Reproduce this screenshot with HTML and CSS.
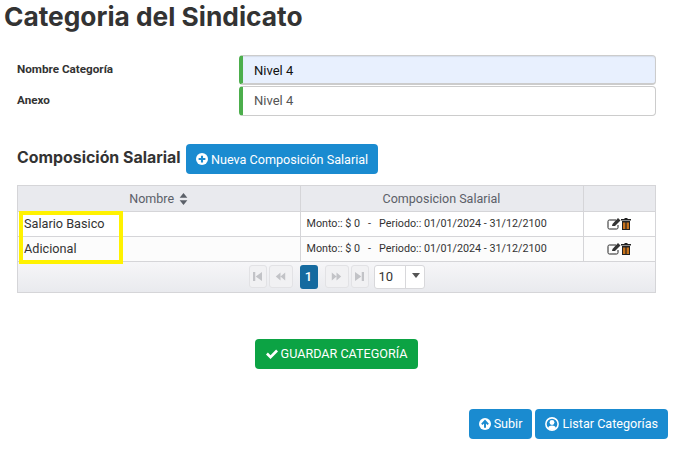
FILE: index.html
```html
<!DOCTYPE html>
<html lang="es">
  <head>
    <meta charset="UTF-8" />
    <title>Categoria del Sindicato</title>
    <link rel="stylesheet" href="styles.css">
  </head>
  <body>
    <h1>Categoria del Sindicato</h1>

    <div class="form">
      <label class="form-label">Nombre Categoría</label>
      <div class="field field-filled">Nivel 4</div>
      <label class="form-label">Anexo</label>
      <div class="field">Nivel 4</div>
    </div>

    <div class="section-head">
      <h2>Composición Salarial</h2>
      <button class="btn btn-blue">
        <svg class="icon" viewBox="0 0 16 16"><circle cx="8" cy="8" r="8" fill="#fff"/><path d="M8 3.500v9M3.500 8h9" stroke="#1a8bd0" stroke-width="2.800"/></svg>
        Nueva Composición Salarial
      </button>
    </div>

    <div class="table-wrap">
      <table class="grid">
        <thead>
          <tr>
            <th class="col-name">Nombre
              <svg class="sort" viewBox="0 0 10 14"><path d="M5 0l4.500 5.500h-9zM5 14L.5 8.500h9z" fill="#5b6068"/></svg>
            </th>
            <th class="col-comp">Composicion Salarial</th>
            <th class="col-actions"></th>
          </tr>
        </thead>
        <tbody>
          <tr>
            <td>Salario Basico</td>
            <td class="comp">Monto:: $ 0 &nbsp; - &nbsp; Periodo:: 01/01/2024 - 31/12/2100</td>
            <td class="actions">
              <svg class="act" viewBox="0 0 14 12"><path d="M9 2H2.500C1.500 2 1 2.500 1 3.500v6C1 10.500 1.500 11 2.500 11h7c1 0 1.500-.5 1.500-1.500V7" fill="none" stroke="#222" stroke-width="1"/><path d="M5 8l.5-2 5.500-6 2.500 2.500L8 8z" fill="#333"/></svg><svg class="act trash" viewBox="0 0 10 12"><path d="M3.500 1V0h3v1H10v1.500H0V1zM1 3h8v9H1z" fill="#222"/><path d="M2 4.500h2.400V11H2zM5.600 4.500H8V11H5.600z" fill="#c8731c"/></svg>
            </td>
          </tr>
          <tr>
            <td>Adicional</td>
            <td class="comp">Monto:: $ 0 &nbsp; - &nbsp; Periodo:: 01/01/2024 - 31/12/2100</td>
            <td class="actions">
              <svg class="act" viewBox="0 0 14 12"><path d="M9 2H2.500C1.500 2 1 2.500 1 3.500v6C1 10.500 1.500 11 2.500 11h7c1 0 1.500-.5 1.500-1.500V7" fill="none" stroke="#222" stroke-width="1"/><path d="M5 8l.5-2 5.500-6 2.500 2.500L8 8z" fill="#333"/></svg><svg class="act trash" viewBox="0 0 10 12"><path d="M3.500 1V0h3v1H10v1.500H0V1zM1 3h8v9H1z" fill="#222"/><path d="M2 4.500h2.400V11H2zM5.600 4.500H8V11H5.600z" fill="#c8731c"/></svg>
            </td>
          </tr>
        </tbody>
      </table>
      <div class="pager">
        <span class="page-btn page-narrow"><svg viewBox="0 0 10 12"><path d="M0 1h2.500v10H0zM10 1v10L3 6z"/></svg></span>
        <span class="page-btn"><svg viewBox="0 0 14 12"><path d="M7 1v10L1 6zM13 1v10L7 6z"/></svg></span>
        <span class="page-current">1</span>
        <span class="page-btn"><svg viewBox="0 0 14 12"><path d="M1 1v10l6-5zM7 1v10l6-5z"/></svg></span>
        <span class="page-btn page-narrow"><svg viewBox="0 0 10 12"><path d="M0 1v10l7-5zM7.500 1H10v10H7.500z"/></svg></span>
        <span class="page-size"><span class="size-value">10</span><span class="size-arrow"></span></span>
      </div>
      <div class="highlight"></div>
    </div>

    <div class="save-row">
      <button class="btn btn-green">
        <svg class="icon" viewBox="0 0 16 16"><path d="M0 8.500l2.500-2.500 3.500 3.500L13.500 2 16 4.500 6 14.500z" fill="#fff"/></svg>
        GUARDAR CATEGORÍA
      </button>
    </div>

    <div class="bottom-row">
      <button class="btn btn-blue">
        <svg class="icon" viewBox="0 0 16 16"><circle cx="8" cy="8" r="8" fill="#fff"/><path d="M8 13V5M3.800 8.500L8 4l4.200 4.500" fill="none" stroke="#1a8bd0" stroke-width="2.600"/></svg>
        Subir
      </button>
      <button class="btn btn-blue">
        <svg class="icon icon-lg" viewBox="0 0 16 16"><circle cx="8" cy="8" r="7" fill="none" stroke="#fff" stroke-width="1.800"/><circle cx="8" cy="6.300" r="2.800" fill="#fff"/><path d="M3.500 12.500c.8-2 2.400-2.800 4.500-2.800s3.700.8 4.500 2.800C11.300 14 9.700 14.500 8 14.500s-3.300-.5-4.500-2z" fill="#fff"/></svg>
        Listar Categorías
      </button>
    </div>
  </body>
</html>
```

FILE: styles.css
```css
* {
  box-sizing: border-box;
  margin: 0;
  padding: 0;
}

body {
  font-family: "Roboto", sans-serif;
  font-size: 13px;
  color: #333;
  background: #fff;
  width: 684px;
  height: 451px;
  overflow: hidden;
  padding: 1px 16px 0 4px;
}

h1 {
  font-family: "Inter", sans-serif;
  font-size: 26.300px;
  font-weight: 700;
  line-height: 31px;
  color: #333;
}

.form {
  display: grid;
  grid-template-columns: 222px 417px;
  grid-auto-rows: 30px;
  row-gap: 1px;
  margin: 23px 0 0 13px;
  width: 639px;
}

.form-label {
  font-size: 11.700px;
  font-weight: 700;
  color: #333;
  padding-top: 7px;
}

.field {
  border: 1px solid #ccc;
  border-left: 4px solid #4cae4c;
  border-radius: 4px;
  padding-left: 11px;
  font-size: 13px;
  line-height: 27px;
  color: #555;
  background: #fff;
}

.field-filled {
  background: #e8f0fe;
  color: #111;
  line-height: 29px;
  border-bottom-width: 2px;
  box-shadow: inset 0 1px 1px rgba(0, 0, 0, 0.08);
}

.section-head {
  display: flex;
  align-items: center;
  margin: 28px 0 0 13px;
  height: 30px;
}

h2 {
  font-family: "Inter", sans-serif;
  font-size: 15.900px;
  font-weight: 700;
  color: #333;
  width: 169px;
  white-space: nowrap;
  padding-bottom: 3px;
}

.btn {
  display: inline-flex;
  align-items: center;
  justify-content: center;
  gap: 3px;
  height: 30px;
  border: none;
  border-radius: 4px;
  padding: 0 10px;
  font-family: "Roboto", sans-serif;
  font-size: 12.600px;
  font-weight: 400;
  color: #fff;
  white-space: nowrap;
}

.btn-blue {
  background: #1a8bd0;
}

.btn-green {
  background: #0ca344;
  width: 163px;
}

.icon {
  width: 12px;
  height: 12px;
  flex-shrink: 0;
}

.icon-lg {
  width: 14px;
  height: 14px;
}

.table-wrap {
  position: relative;
  width: 639px;
  margin: 11px 0 0 13px;
  border: 1px solid #d5d5d8;
}

.grid {
  width: 100%;
  border-collapse: collapse;
  table-layout: fixed;
}

.grid th {
  height: 25px;
  background: #e9eaee;
  font-size: 12.500px;
  font-weight: 400;
  color: #5b6068;
  border-right: 1px solid #d5d5d8;
  border-bottom: 1px solid #d5d5d8;
}

.grid td {
  height: 25px;
  padding-left: 6px;
  font-size: 12.700px;
  color: #333;
  background: #fff;
  border-right: 1px solid #d5d5d8;
  border-bottom: 1px solid #d5d5d8;
}

.grid tr:nth-child(2) td {
  background: #fcfcfc;
}

.grid th:last-child,
.grid td:last-child {
  border-right: none;
}

.col-name {
  width: 282px;
}

.col-comp {
  width: 283px;
}

.sort {
  width: 9px;
  height: 12px;
  margin-left: 2px;
  vertical-align: -2px;
}

.grid td.comp {
  font-size: 10.750px;
}

.grid td.actions {
  padding: 0;
  text-align: center;
  font-size: 0;
}

.act {
  width: 14px;
  height: 12px;
}

.act.trash {
  width: 10px;
}

.pager {
  display: flex;
  align-items: center;
  justify-content: center;
  height: 30px;
  background: linear-gradient(#f6f6f8, #e9eaee);
}

.page-btn {
  display: flex;
  align-items: center;
  justify-content: center;
  width: 24px;
  height: 23px;
  margin-right: 2px;
  border: 1px solid #e2e2e5;
  border-radius: 3px;
  background: #f1f1f3;
}

.page-narrow {
  width: 18px;
}

.page-btn svg {
  width: 11px;
  height: 11px;
  fill: #c2c3c7;
}

.page-narrow svg {
  width: 9px;
}

.page-current {
  width: 18px;
  height: 24px;
  margin: 0 7px 0 5px;
  border-radius: 3px;
  background: #156a9f;
  color: #fff;
  font-size: 13px;
  font-weight: 500;
  line-height: 24px;
  text-align: center;
}

.page-size {
  display: flex;
  width: 51px;
  height: 24px;
  margin-left: 3px;
  border: 1px solid #d8d8db;
  border-radius: 3px;
  background: #fff;
}

.size-value {
  width: 31px;
  padding-left: 4px;
  font-size: 13px;
  line-height: 22px;
  color: #333;
  border-right: 1px solid #d8d8db;
}

.size-arrow {
  width: 0;
  height: 0;
  margin: 7px 0 0 6px;
  border-left: 4px solid transparent;
  border-right: 4px solid transparent;
  border-top: 5px solid #555;
}

.highlight {
  position: absolute;
  left: 1px;
  top: 25px;
  width: 104px;
  height: 53px;
  border: 4px solid #fff200;
}

.save-row {
  margin: 46px 0 0 251px;
}

.bottom-row {
  display: flex;
  gap: 3px;
  justify-content: flex-end;
  margin-top: 40px;
}
```
